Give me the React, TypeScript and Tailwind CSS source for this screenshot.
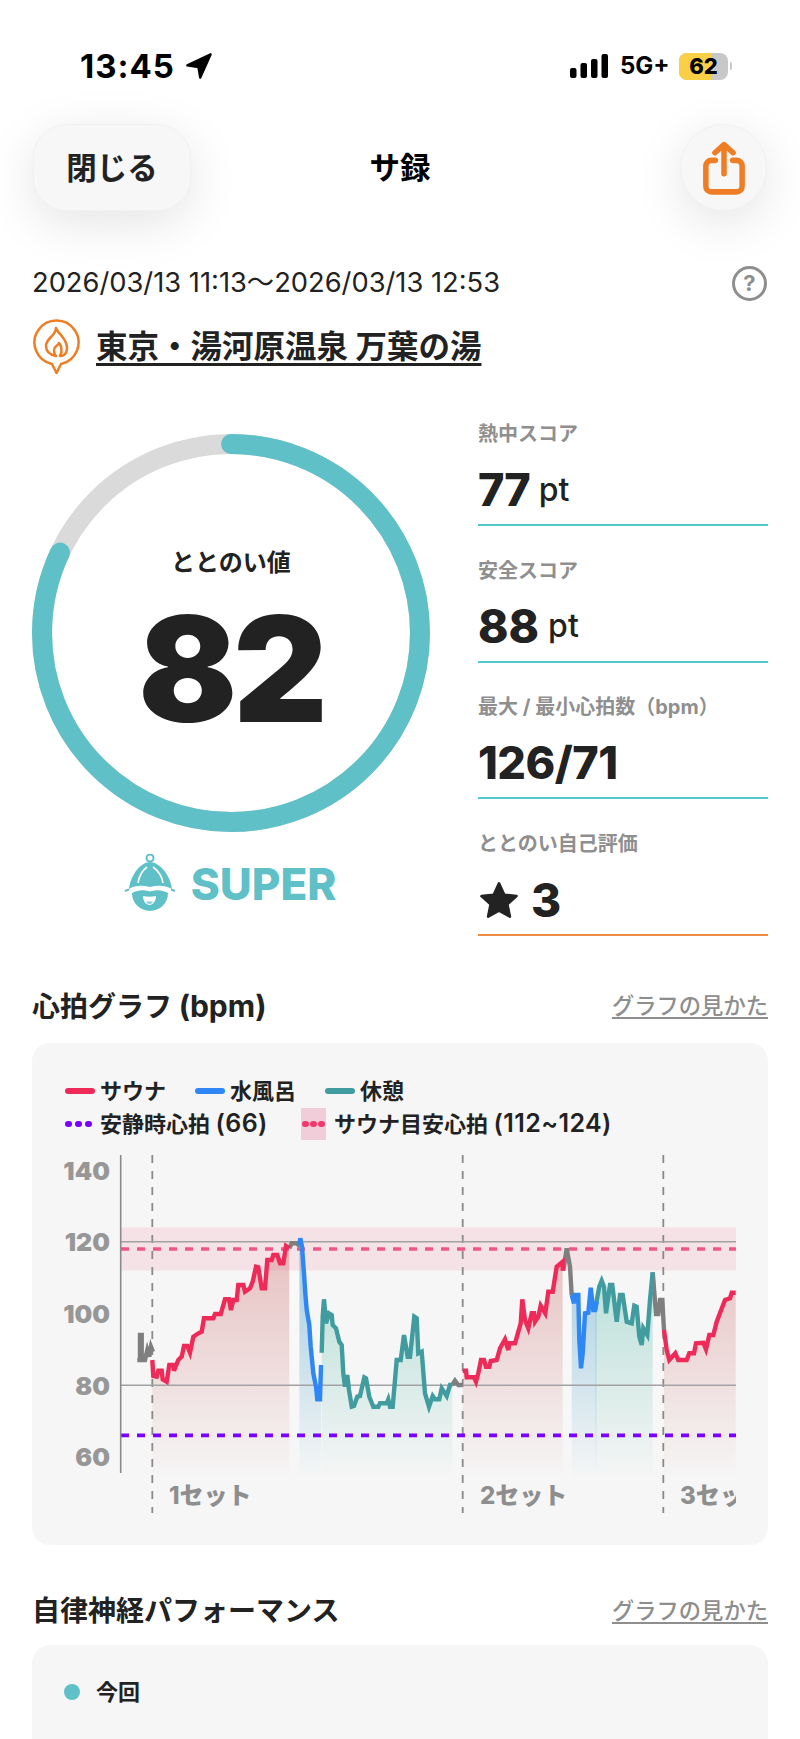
import React from "react";

type P = [number, number];
const z6 = (a: number[]): P[] => { const o: P[] = []; for (let i = 0; i < a.length; i += 2) o.push([30 + a[i] / 3, 1160 + a[i + 1] / 3]); return o; };
const z5 = (a: number[]): P[] => { const o: P[] = []; for (let i = 0; i < a.length; i += 2) o.push([400 + a[i] / 3, 1140 + a[i + 1] / 3]); return o; };
const str = (p: P[]) => p.map(([x, y]) => `${x.toFixed(1)},${y.toFixed(1)}`).join(" ");
const BOTTOM = 1475;
const area = (p: P[]) => `${p[0][0].toFixed(1)},${BOTTOM} ${str(p)} ${p[p.length - 1][0].toFixed(1)},${BOTTOM}`;

const grey0 = z6([322,600,330,600,330,525,335,525,335,600,345,600,352,570,358,590,363,560,369,575]);
const red1 = z6([367,600,370,648,380,650,385,632,395,632,398,658,410,665,418,615,430,615,432,632,445,600,455,590,462,558,472,558,480,578,490,530,505,520,515,515,522,475,550,475,555,462,572,462,585,418,597,418,603,450,610,420,620,420,625,375,640,375,645,395,660,385,668,365,678,320,685,322,695,385,705,385,712,300,725,300,730,285,742,285,750,310,760,310,768,258,778,265]);
const grey1 = z6([778,265,785,250,800,250,810,258]);
const blue1 = z6([808,255,811,235,816,260,822,340,826,400,830,450,838,495,842,560,850,640,858,680,862,718,870,718,873,615]);
const teal1 = z6([875,578,878,470,882,418,888,490,897,460,905,465,908,495,918,505,928,545,935,555,940,640,945,680,952,645,957,690,965,740,972,738,982,710,990,708,1003,652,1008,655,1018,710,1030,740,1045,740,1050,730,1070,730,1075,718,1080,740,1088,740,1100,600,1112,600,1122,525,1133,590,1140,590,1153,470,1160,475,1165,580,1175,575,1185,700,1197,740]).concat(z5([98,768,105,778,118,778,125,745,140,768,150,735,157,735]));
const grey2 = z5([157,735,165,722,175,735,188,735]);
const red2 = z5([188,692,198,692,200,712,222,712,228,725,235,700,243,660,252,660,258,680,268,680,272,663,290,660,300,625,315,598,325,630,328,610,345,610,362,550,367,478,375,540,385,565,395,520,402,520,405,545,415,530,422,497,436,520,445,455,458,455,470,380,488,365,488,392]);
const grey3 = z5([490,392,500,325,510,380,515,465]);
const blue2 = z5([515,465,522,490,524,465,535,465,538,600,543,685,548,640,555,520,565,518,572,443,580,510,585,510,590,485]);
const teal2 = z5([585,510,598,440,605,422,612,440,618,520,630,435,637,435,650,545,660,465,668,465,680,545,695,550,703,497,710,500,718,590,725,615,730,565,742,585,750,480,758,397]);
const grey4 = z5([758,397,768,522,775,522,780,480,787,480,792,570]);
const red3 = z5([792,570,800,630,808,660,826,640,835,660,860,660,868,640,882,640,888,610,910,608,918,628,928,585,940,585,950,545,975,480,990,475,995,458,1007,458]);

const FONT = "font-['Inter','Noto_Sans_CJK_JP',sans-serif]";
const LW = 4.4;

function Stat({ label, children, line, first }: { label: string; children: React.ReactNode; line: string; first?: boolean }) {
  return (
    <div className={`h-[106px] ${first ? "" : "mt-[30.7px]"} border-b-2 ${line}`}>
      <div className="h-[28px] leading-[28px] text-[20px] font-bold text-[#8f8f8f] whitespace-nowrap">{label}</div>
      <div className="h-[76px] pt-[7px] flex items-center text-[#222]">{children}</div>
    </div>
  );
}

function Chart() {
  return (
    <svg viewBox="32 1150 736 370" className="block w-[736px] h-[370px] mt-[10px]">
      <defs>
        <linearGradient id="gr" gradientUnits="userSpaceOnUse" x1="0" y1="1250" x2="0" y2="1475">
          <stop offset="0" stopColor="#e3b4b4" stopOpacity="0.8" />
          <stop offset="1" stopColor="#e3b4b4" stopOpacity="0.02" />
        </linearGradient>
        <linearGradient id="gb" gradientUnits="userSpaceOnUse" x1="0" y1="1250" x2="0" y2="1475">
          <stop offset="0" stopColor="#8fc3dc" stopOpacity="0.8" />
          <stop offset="1" stopColor="#8fc3dc" stopOpacity="0.02" />
        </linearGradient>
        <linearGradient id="gt" gradientUnits="userSpaceOnUse" x1="0" y1="1250" x2="0" y2="1475">
          <stop offset="0" stopColor="#8fd0c4" stopOpacity="0.65" />
          <stop offset="1" stopColor="#8fd0c4" stopOpacity="0.02" />
        </linearGradient>
        <linearGradient id="gw" gradientUnits="userSpaceOnUse" x1="0" y1="1250" x2="0" y2="1475">
          <stop offset="0" stopColor="#ffffff" stopOpacity="0.35" />
          <stop offset="1" stopColor="#ffffff" stopOpacity="0" />
        </linearGradient>
        <clipPath id="plot"><rect x="120" y="1150" width="616" height="370" /></clipPath>
      </defs>
      <g clipPath="url(#plot)">
        <polygon points={area(red1)} fill="url(#gr)" />
        <polygon points={area(red2)} fill="url(#gr)" />
        <polygon points={area(red3)} fill="url(#gr)" />
        <polygon points={area(blue1)} fill="url(#gb)" />
        <polygon points={area(blue2)} fill="url(#gb)" />
        <polygon points={area(teal1)} fill="url(#gt)" />
        <polygon points={area(teal2)} fill="url(#gt)" />
        <rect x="289.5" y="1250" width="10" height="225" fill="url(#gw)" />
        <rect x="452.5" y="1385" width="10" height="90" fill="url(#gw)" />
        <rect x="562.7" y="1270" width="9" height="205" fill="url(#gw)" />
        <rect x="652.7" y="1290" width="11" height="185" fill="url(#gw)" />
        <rect x="121" y="1227.5" width="615" height="43" fill="#ee5078" fillOpacity="0.12" />
        {[152.3, 462.7, 663.3].map((x) => (
          <line key={x} x1={x} x2={x} y1="1155" y2="1513" stroke="#8a8a8a" strokeWidth="1.8" strokeDasharray="8 8" />
        ))}
        <line x1="121" x2="736" y1="1241.7" y2="1241.7" stroke="#a3a1a3" strokeWidth="1.6" />
        <line x1="121" x2="736" y1="1385.3" y2="1385.3" stroke="#a3a1a3" strokeWidth="1.6" />
        <line x1="121" x2="736" y1="1249" y2="1249" stroke="#f0558a" strokeWidth="3.6" strokeDasharray="8 8" />
        <line x1="121" x2="736" y1="1435.4" y2="1435.4" stroke="#7a00ff" strokeWidth="3.6" strokeDasharray="8 8" />
        {[grey0, grey1, grey2, grey3, grey4].map((p, i) => (
          <polyline key={i} points={str(p)} fill="none" stroke="#7f7f7f" strokeWidth={LW} />
        ))}
        {[red1, red2, red3].map((p, i) => (
          <polyline key={i} points={str(p)} fill="none" stroke="#ee2b58" strokeWidth={LW} />
        ))}
        {[teal1, teal2].map((p, i) => (
          <polyline key={i} points={str(p)} fill="none" stroke="#409c9f" strokeWidth={LW} />
        ))}
        {[blue1, blue2].map((p, i) => (
          <polyline key={i} points={str(p)} fill="none" stroke="#2f86f5" strokeWidth={LW} />
        ))}
        <g fontSize="24" fontWeight="800" fill="#8e8e8e">
          <text x="169" y="1504">1セット</text>
          <text x="480" y="1504">2セット</text>
          <text x="680" y="1504">3セット</text>
        </g>
      </g>
      <line x1="120.7" x2="120.7" y1="1155" y2="1473" stroke="#8a8a8a" strokeWidth="1.6" />
      <g fontSize="25" fontWeight="900" fill="#979797" textAnchor="end">
        <text x="110" y="1180">140</text>
        <text x="110" y="1251">120</text>
        <text x="110" y="1323">100</text>
        <text x="110" y="1395">80</text>
        <text x="110" y="1466">60</text>
      </g>
    </svg>
  );
}

function GraphLink() {
  return <span className="text-[22.3px] font-medium text-[#8e8e8e] underline underline-offset-[3px] decoration-[1.5px]">グラフの見かた</span>;
}

export default function App() {
  return (
    <div className={`${FONT} flow-root w-[800px] h-[1739px] overflow-hidden bg-white text-[#222]`}>
      {/* Status bar */}
      <div className="flex items-center justify-between h-[32px] mt-[50px] mb-[42px] pl-[80px] pr-[68px]">
        <div className="flex items-center gap-[10px]">
          <span className="text-[33px] leading-none font-bold text-black tracking-[1px]">13:45</span>
          <svg viewBox="0 0 24 24" className="w-[28px] h-[28px]"><path d="M22 2 L2 11.5 L11.5 13 L13 22 Z" fill="#000" stroke="#000" strokeWidth="2" strokeLinejoin="round" /></svg>
        </div>
        <div className="flex items-center">
          <svg viewBox="0 0 38 25" className="w-[38px] h-[25px]">
            <rect x="0" y="14" width="6.5" height="10" rx="2" /><rect x="10.5" y="9" width="6.5" height="15" rx="2" /><rect x="21" y="5" width="6.5" height="19" rx="2" /><rect x="31.5" y="0" width="6.5" height="24" rx="2" />
          </svg>
          <span className="ml-[12px] text-[24px] leading-none font-bold text-black w-[59px]">5G+</span>
          <div className="relative flex h-[27px] w-[49px] overflow-hidden rounded-[8px] bg-[#c8c8c8]">
            <div className="w-[32px] bg-[#f8cf45]" />
            <span className="absolute inset-0 text-center text-[22px] leading-[27px] font-extrabold text-black">62</span>
          </div>
          <div className="ml-[2px] h-[8px] w-[2px] rounded-r bg-[#c8c8c8]" />
        </div>
      </div>

      {/* Nav */}
      <div className="grid grid-cols-3 items-center h-[87px] px-[33px]">
        <div className="flex h-[87px] w-[158px] items-center justify-center rounded-[34px] border border-[#f1f1f1] bg-[#f7f7f7] text-[30.5px] font-semibold shadow-[0_12px_50px_rgba(0,0,0,0.11)]">閉じる</div>
        <span className="text-center text-[30.5px] font-bold text-black">サ録</span>
        <div className="justify-self-end flex h-[87px] w-[87px] items-center justify-center rounded-full border border-[#f1f1f1] bg-[#f7f7f7] shadow-[0_12px_50px_rgba(0,0,0,0.11)]">
          <svg viewBox="0 0 44 56" className="w-[42px] h-[54px]" fill="none" stroke="#ef7d25" strokeWidth="5.8" strokeLinecap="round" strokeLinejoin="round">
            <path d="M13 20 H9 A6 6 0 0 0 3 26 V47 A6 6 0 0 0 9 53 H35 A6 6 0 0 0 41 47 V26 A6 6 0 0 0 35 20 H31" />
            <path d="M22 34 V4 M12.5 12 L22 3.5 L31.5 12" />
          </svg>
        </div>
      </div>

      {/* Date */}
      <div className="mt-[54px] flex h-[36px] items-center justify-between pl-[32px] pr-[32px]">
        <span className="text-[27.3px] font-normal whitespace-nowrap">2026/03/13 11:13～2026/03/13 12:53</span>
        <div className="mr-[1px] flex h-[35px] w-[35px] items-center justify-center rounded-full border-[3px] border-[#8e8e8e] text-[22px] font-bold leading-none text-[#8e8e8e]">?</div>
      </div>

      {/* Place */}
      <div className="mt-[19px] flex h-[54px] items-center pl-[33px]">
        <svg viewBox="0 0 47 56" className="w-[47px] h-[56px] shrink-0" fill="none" stroke="#ef7d25" strokeWidth="2.5" strokeLinejoin="round" strokeLinecap="round">
          <path d="M19 45 A22 22 0 1 1 28 45 L23.5 54 Z" />
          <path d="M23 9 C25 15 34 19 34 29 C34 36 29 37 27 37 C30 32 28 26 26 24 C24 28 21 27 21 31 C21 34 22 36 23 37 C18 36 13 33 13 27 C13 19 23 17 23 9 Z" />
        </svg>
        <span className="ml-[16px] text-[31.5px] font-bold underline underline-offset-[5px] decoration-[3px] whitespace-nowrap">東京・湯河原温泉 万葉の湯</span>
      </div>

      {/* Score */}
      <div className="mt-[46px] flex justify-between pl-[32px] pr-[32px]">
        <div className="w-[398px] pt-[14px]">
          <div className="grid h-[398px] w-[398px]">
            <svg viewBox="0 0 398 398" className="col-start-1 row-start-1 h-[398px] w-[398px]">
              <circle cx="199" cy="199" r="189" fill="none" stroke="#dadada" strokeWidth="20" />
              <circle cx="199" cy="199" r="189" fill="none" stroke="#5fc0c8" strokeWidth="20" strokeLinecap="round" pathLength="100" strokeDasharray="82 100" transform="rotate(-90 199 199)" />
            </svg>
            <div className="col-start-1 row-start-1 flex flex-col items-center">
              <div className="mt-[112px] h-[34px] text-[24px] font-bold leading-[34px]">ととのい値</div>
              <div className="mt-[37px] text-[146px] font-black leading-[104px] tracking-[-4px]">82</div>
            </div>
          </div>
          <div className="mt-[22px] flex h-[60px] items-center justify-center gap-[11px] pr-[2px]">
            <svg viewBox="124 853 56 60" className="h-[60px] w-[56px]">
              <circle cx="150" cy="857" r="3.5" fill="none" stroke="#5fc0c8" strokeWidth="2" />
              <path d="M129 888 C131 872 142 861 150 861 C158 861 170 872 172 888 C165 884 158 884 150 886 C142 884 135 884 129 888 Z" fill="#5fc0c8" />
              <path d="M138 882 C139 875 143 869 147 866 M163 882 C162 875 157 869 153 866" fill="none" stroke="#fff" strokeWidth="1.6" />
              <path d="M125 890 L129 888.5 M175 890 L171 888.5" stroke="#5fc0c8" strokeWidth="2" />
              <path d="M132 892 C139 888 145 889 150 890.5 C155 889 161 888 168 892 A18 18 0 0 1 132 892 Z" fill="#5fc0c8" />
              <path d="M143 895 C147 896 152 896 156 895 C156 900 153 904 149.5 904 C146 904 143 900 143 895 Z" fill="#fff" />
              <path d="M146 901 C148 900 151 900 153 901 C152 903.5 147 903.5 146 901 Z" fill="#8fd0d6" />
            </svg>
            <span className="text-[44px] font-extrabold leading-none text-[#5fc0c8]">SUPER</span>
          </div>
        </div>

        <div className="w-[290px]">
          <Stat first label="熱中スコア" line="border-[#52c8c8]">
            <span className="text-[45px] font-extrabold leading-none tracking-[-1px]">77</span>
            <span className="ml-[9px] text-[32px] font-medium leading-none">pt</span>
          </Stat>
          <Stat label="安全スコア" line="border-[#52c8c8]">
            <span className="text-[46px] font-extrabold leading-none">88</span>
            <span className="ml-[9px] text-[32px] font-medium leading-none">pt</span>
          </Stat>
          <Stat label="最大 / 最小心拍数（bpm）" line="border-[#52c8c8]">
            <span className="text-[45px] font-extrabold leading-none tracking-[-0.5px]">126/71</span>
          </Stat>
          <Stat label="ととのい自己評価" line="border-[#ee8b45]">
            <svg viewBox="0 0 24 24" className="h-[42px] w-[42px]"><path d="M12 2.5 L15 9 L22 9.8 L16.8 14.5 L18.2 21.5 L12 18 L5.8 21.5 L7.2 14.5 L2 9.8 L9 9 Z" fill="#222" stroke="#222" strokeWidth="1.5" strokeLinejoin="round" /></svg>
            <span className="ml-[11px] text-[46px] font-extrabold leading-none">3</span>
          </Stat>
        </div>
      </div>

      {/* Heart rate */}
      <div className="mt-[50px] flex h-[40px] items-center justify-between pl-[32px] pr-[32px]">
        <span className="text-[28px] font-bold">心拍グラフ <span className="text-[30px]">(bpm)</span></span>
        <GraphLink />
      </div>
      <div className="mx-[32px] mt-[17px] h-[502px] rounded-[18px] bg-[#f6f6f6] pt-[32px]">
        <div className="flex h-[32px] items-center gap-[29px] pl-[33px] text-[22px] font-semibold">
          {[["サウナ", "bg-[#ee2b58]"], ["水風呂", "bg-[#2f86f5]"], ["休憩", "bg-[#409c9f]"]].map(([t, c]) => (
            <div key={t} className="flex items-center gap-[5px]">
              <div className={`h-[6px] w-[30px] rounded-full ${c}`} />
              <span>{t}</span>
            </div>
          ))}
        </div>
        <div className="mt-[1px] flex h-[32px] items-center pl-[33px] text-[22px] font-semibold">
          <div className="flex w-[35px] gap-[3px]">
            {[0, 1, 2].map((i) => <div key={i} className="h-[6px] w-[7px] rounded-full bg-[#7a00ff]" />)}
          </div>
          <span className="w-[201px] whitespace-nowrap">安静時心拍 <span className="text-[25px] tracking-[0.4px]">(66)</span></span>
          <div className="flex h-[32px] w-[25px] items-center justify-center gap-[1.5px] bg-[#f0cdd8]">
            {[0, 1, 2].map((i) => <div key={i} className="h-[6px] w-[6.5px] rounded-full bg-[#f0386e]" />)}
          </div>
          <span className="ml-[8px] whitespace-nowrap">サウナ目安心拍 <span className="text-[25px] tracking-[0.4px]">(112~124)</span></span>
        </div>
        <Chart />
      </div>

      {/* Autonomic */}
      <div className="mt-[46px] flex h-[40px] items-center justify-between pl-[32px] pr-[32px]">
        <span className="text-[28px] font-bold">自律神経パフォーマンス</span>
        <GraphLink />
      </div>
      <div className="mx-[32px] mt-[14px] h-[120px] rounded-[18px] bg-[#f6f6f6] pl-[32px] pt-[31px]">
        <div className="flex h-[32px] items-center gap-[16px]">
          <div className="h-[16px] w-[16px] rounded-full bg-[#5fc0c8]" />
          <span className="text-[22px] font-semibold">今回</span>
        </div>
      </div>
    </div>
  );
}
